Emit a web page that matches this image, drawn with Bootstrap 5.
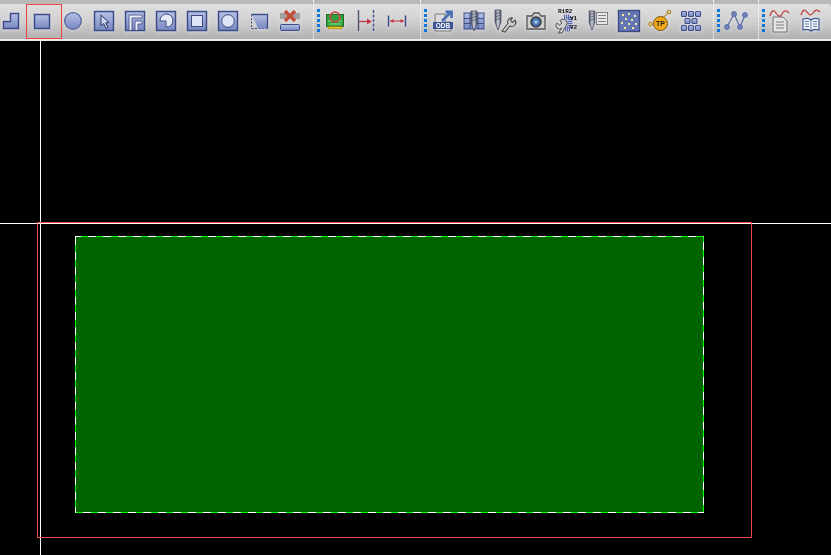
<!DOCTYPE html>
<html lang="en">
<head>
    <meta charset="UTF-8">
    <title>Layout editor</title>
    <link href="https://cdn.jsdelivr.net/npm/bootstrap@5.3.3/dist/css/bootstrap.min.css" rel="stylesheet">
    <style>
        html, body { height: 100%; }
        body { background: #000; overflow: hidden; font-family: "Liberation Sans", Arial, sans-serif; }
        .tool-strip { height: 41px; background: #b9b9b9; border-bottom: 2px solid #ececec; padding-top: 4px; }
        .tool-group { height: 35px; border-left: 1px dotted #fff; background: linear-gradient(#e0e0e0, #d0d0d0 50%, #b0b0b0); border-top-right-radius: 3px; border-bottom-right-radius: 3px; position: relative; }
        .tool-group::before { content: ""; position: absolute; left: 0; top: -4px; height: 4px; border-left: 1px dotted #fff; margin-left: -1px; }
        .group-a { width: 313px; border-left: 0; padding-left: 0; }
        .group-b { width: 107px; }
        .group-c { width: 293px; }
        .group-d { width: 45px; }
        .group-e { flex: 1; }
        .grip { width: 3px; height: 25px; margin: 5px 3px 0 3px; flex: none; background: repeating-linear-gradient(#0a78dc 0 3px, transparent 3px 5px); }
        .group-c .grip { margin-right: 4px; }
        .tool-btn { width: 24px; height: 24px; flex: none; position: relative; overflow: visible; filter: drop-shadow(0 0 2px rgba(226,226,234,1)); }
        .tool-row { gap: 7px; padding-top: 5px; }
        .group-a .tool-row { margin-left: -1px; }
        .active-tool { position: absolute; left: 26px; top: 0; width: 36px; height: 35px; border: 1px solid #f04040; }
        .canvas-area { display: block; }
    </style>
</head>
<body>
    <svg width="0" height="0" class="position-absolute">
        <defs>
            <linearGradient id="tile" x1="0" y1="0" x2="0" y2="1">
                <stop offset="0" stop-color="#b6c1e4"/>
                <stop offset="1" stop-color="#7788c2"/>
            </linearGradient>
            <linearGradient id="metal" x1="0" y1="0" x2="1" y2="0">
                <stop offset="0" stop-color="#4c5264"/>
                <stop offset=".5" stop-color="#ccd0da"/>
                <stop offset="1" stop-color="#4c5264"/>
            </linearGradient>
            <symbol id="drill" viewBox="0 0 8 22">
                <path d="M1 1H7V13L4 21 1 13Z" fill="url(#metal)" stroke="#484e62" stroke-width=".8"/>
                <path d="M1 5 7 3M1 8 7 6M1 11 7 9" stroke="#484e62" stroke-width=".7"/>
            </symbol>
        </defs>
    </svg>

    <div class="tool-strip d-flex">
        <div class="tool-group group-a">
            <div class="tool-row d-flex">
                <svg class="tool-btn" viewBox="0 0 24 24"><path d="M4.500 12.500H11.500V4.500H19.500V19.500H4.500Z" fill="url(#tile)" stroke="#3e4d86" stroke-width="1.500"/></svg>
                <svg class="tool-btn" viewBox="0 0 24 24"><rect x="4.500" y="5.500" width="15" height="14" fill="url(#tile)" stroke="#3e4d86" stroke-width="1.500"/></svg>
                <svg class="tool-btn" viewBox="0 0 24 24"><circle cx="12" cy="12" r="8.300" fill="url(#tile)" stroke="#54649c" stroke-width="1.300"/></svg>
                <svg class="tool-btn" viewBox="0 0 24 24"><rect x="2.500" y="2.500" width="19" height="19" fill="url(#tile)" stroke="#3e4d86" stroke-width="1.500"/><path d="M9 6V17L11.700 14.500 14 19.500 16 18.500 13.700 13.700H17Z" fill="#cfd6ee" stroke="#2e3a66"/></svg>
                <svg class="tool-btn" viewBox="0 0 24 24"><rect x="2.500" y="2.500" width="19" height="19" fill="url(#tile)" stroke="#3e4d86" stroke-width="1.500"/><path d="M6 21V6H19V9H9V21M12 21V12H19V15H15V21" fill="#e6eaf6" stroke="#3c4a80" stroke-width=".8"/></svg>
                <svg class="tool-btn" viewBox="0 0 24 24"><rect x="2.500" y="2.500" width="19" height="19" fill="url(#tile)" stroke="#3e4d86" stroke-width="1.500"/><path d="M6 11A6.500 6.500 0 1 1 12 18V12H6Z" fill="#e6eaf6" stroke="#3c4a80"/></svg>
                <svg class="tool-btn" viewBox="0 0 24 24"><rect x="2.500" y="2.500" width="19" height="19" fill="url(#tile)" stroke="#3e4d86" stroke-width="1.500"/><rect x="6.500" y="6.500" width="11" height="11" fill="#dfe4f4" stroke="#3c4a80"/></svg>
                <svg class="tool-btn" viewBox="0 0 24 24"><rect x="2.500" y="2.500" width="19" height="19" fill="url(#tile)" stroke="#3e4d86" stroke-width="1.500"/><circle cx="12" cy="12" r="6.300" fill="#dfe4f4" stroke="#3c4a80"/></svg>
                <svg class="tool-btn" viewBox="0 0 24 24"><path d="M4.500 5.500V19.500H20" fill="none" stroke="#3e4d86" stroke-dasharray="2 1.500"/><path d="M4.500 5.500H20.500V19.500H11Z" fill="url(#tile)"/><path d="M4.500 5.500H20.500V19.500" fill="none" stroke="#3e4d86" stroke-width="1.300"/></svg>
                <svg class="tool-btn" viewBox="0 0 24 24"><rect x="2" y="4" width="20" height="6" fill="#a0a0a0"/><path d="M7 2 17 12M17 2 7 12" stroke="#c0503c" stroke-width="3.400"/><rect x="2.500" y="15.500" width="19" height="6" rx="1" fill="url(#tile)" stroke="#3e4d86"/></svg>
            </div>
            <div class="active-tool"></div>
        </div>

        <div class="tool-group group-b d-flex">
            <div class="grip"></div>
            <div class="tool-row d-flex">
                <svg class="tool-btn" viewBox="0 0 24 24"><rect x="3.500" y="5.500" width="17" height="12" fill="#2fa23c" stroke="#1a6a28"/><path d="M5 12H9M15 12H19M6 15H18" stroke="#8fe08a"/><rect x="5" y="17.500" width="14" height="2.500" fill="#e0c020" stroke="#8a7410" stroke-width=".5"/><circle cx="12" cy="8" r="4.800" fill="none" stroke="#c84646" stroke-width="1.800"/></svg>
                <svg class="tool-btn" viewBox="0 0 24 24"><path d="M4.500 1V22" stroke="#50586c" stroke-width="1.500"/><path d="M19.500 1V22" stroke="#46558c" stroke-width="1.500" stroke-dasharray="3 1.500"/><path d="M5 12.500H14" stroke="#c03c44" stroke-width="1.300"/><path d="M18 12.500 13 9.500V15.500Z" fill="#c03c44"/></svg>
                <svg class="tool-btn" viewBox="0 0 24 24"><path d="M3.500 6.500V17.500M20.500 6.500V17.500" stroke="#3c4a88" stroke-width="1.500"/><path d="M5 12H19" stroke="#c03c44" stroke-width="1.100"/><path d="M5 12 8.500 10V14ZM19 12 15.500 10V14Z" fill="#c03c44"/></svg>
            </div>
        </div>

        <div class="tool-group group-c d-flex">
            <div class="grip"></div>
            <div class="tool-row d-flex">
                <svg class="tool-btn" viewBox="0 0 24 24"><path d="M4 5H14V13H20V22H4Z" fill="#dcdcdc" stroke="#777"/><path d="M11 12 19 4M14.500 3H20.500V9" fill="none" stroke="#4a70b4" stroke-width="2.800"/><rect x="2" y="13" width="20" height="7" fill="#3c5494"/><text x="12" y="19" text-anchor="middle" fill="#fff" font-family="Liberation Sans" font-size="6.500" font-weight="700">ODB</text></svg>
                <svg class="tool-btn" viewBox="0 0 24 24"><rect x="2" y="4" width="20" height="16" fill="url(#tile)" stroke="#3e4d86"/><path d="M8 4V20M16 4V20M2 9.500H22M2 14.500H22" stroke="#3e4d86"/><use href="#drill" x="8" y="1" width="8" height="22"/></svg>
                <svg class="tool-btn" viewBox="0 0 24 24"><use href="#drill" x="1" y="0" width="8" height="22"/><path d="M9 22 15 14.500A4 4 0 0 1 19.500 9L17.500 11.500 19.500 13.500 22 11A4 4 0 0 1 17 17L12 23Z" fill="#d0d0d0" stroke="#4c4c4c" stroke-width="1.100"/></svg>
                <svg class="tool-btn" viewBox="0 0 24 24"><path d="M3 7H8L10 4H15L17 7H21V20H3Z" fill="#d0d0d0" stroke="#555" stroke-width="1.300"/><circle cx="12" cy="13" r="5" fill="#4a74b4" stroke="#3c3c3c" stroke-width="1.500"/><circle cx="12" cy="13" r="1.800" fill="#a8c4e8"/></svg>
                <svg class="tool-btn" viewBox="0 0 24 24"><text x="3" y="4" fill="#111" font-family="Liberation Mono" font-size="6" font-weight="700">R1R2</text><path d="M9 8H15V20H10" fill="none" stroke="#5a6ab0" stroke-width="5" stroke-dasharray="1.200 .8"/><text x="15" y="11" fill="#111" font-family="Liberation Mono" font-size="6" font-weight="700">V1</text><text x="15" y="20" fill="#111" font-family="Liberation Mono" font-size="6" font-weight="700">V2</text><path d="M3 24 7 19A3.500 3.500 0 0 1 2 14L4.500 16 7 14 5 11.500A4 4 0 0 1 11 17L7 24Z" fill="#d0d0d0" stroke="#4c4c4c" stroke-width="1"/></svg>
                <svg class="tool-btn" viewBox="0 0 24 24"><use href="#drill" x="2" y="1" width="8" height="21"/><rect x="10.500" y="3.500" width="11" height="12" fill="#e8e8e8" stroke="#808080"/><path d="M12 6.500H20M12 9.500H20M12 12.500H20" stroke="#808080"/></svg>
                <svg class="tool-btn" viewBox="0 0 24 24"><rect x="1.500" y="1.500" width="21" height="21" fill="#6476b4" stroke="#3c4a80" stroke-width="1.400"/><g fill="#f4e8a0"><rect x="5" y="5" width="2" height="2"/><rect x="11" y="4" width="2" height="2"/><rect x="17" y="6" width="2" height="2"/><rect x="8" y="9" width="2" height="2"/><rect x="14" y="10" width="2" height="2"/><rect x="4" y="13" width="2" height="2"/><rect x="11" y="14" width="2" height="2"/><rect x="18" y="14" width="2" height="2"/><rect x="7" y="18" width="2" height="2"/><rect x="15" y="18" width="2" height="2"/></g></svg>
                <svg class="tool-btn" viewBox="0 0 24 24"><path d="M1 15H6M15 9 20.500 3.500" stroke="#c09030" stroke-width="1.300"/><circle cx="2.500" cy="15" r="1.800" fill="#e8d080" stroke="#a07820"/><circle cx="21" cy="3" r="1.800" fill="#e8d080" stroke="#a07820"/><circle cx="12.500" cy="14.500" r="7" fill="#f0a818" stroke="#7a5410"/><text x="12.500" y="17" text-anchor="middle" fill="#222" font-family="Liberation Sans" font-size="7" font-weight="700">TP</text></svg>
                <svg class="tool-btn" viewBox="0 0 24 24"><g fill="url(#tile)" stroke="#3e4d86" stroke-width="1.100"><rect x="2.500" y="2.500" width="5" height="5" rx="1"/><rect x="9.500" y="2.500" width="5" height="5" rx="1"/><rect x="16.500" y="2.500" width="5" height="5" rx="1"/><rect x="6" y="9.500" width="5" height="5" rx="1"/><rect x="13" y="9.500" width="5" height="5" rx="1"/><rect x="2.500" y="16.500" width="5" height="5" rx="1"/><rect x="9.500" y="16.500" width="5" height="5" rx="1"/><rect x="16.500" y="16.500" width="5" height="5" rx="1"/></g></svg>
            </div>
        </div>

        <div class="tool-group group-d d-flex">
            <div class="grip"></div>
            <div class="tool-row d-flex">
                <svg class="tool-btn" viewBox="0 0 24 24"><path d="M4 18 11 5 17 18 22 6" fill="none" stroke="#6070a4" stroke-width="1.300"/><g fill="#7283bc" stroke="#54649c" stroke-width=".8"><circle cx="4" cy="18" r="2.500"/><circle cx="11" cy="5" r="2.500"/><circle cx="17" cy="18" r="2.500"/><circle cx="22" cy="6" r="2.500"/></g></svg>
            </div>
        </div>

        <div class="tool-group group-e d-flex">
            <div class="grip"></div>
            <div class="tool-row d-flex">
                <svg class="tool-btn" viewBox="0 0 24 24"><path d="M5 8H15L19 12V23H5Z" fill="#e4e4e4" stroke="#707070"/><path d="M8 13H16M8 16H16M8 19H16" stroke="#808080"/><path d="M2 7C4 0 6 1 8 4S12 9 14 5 18 1 21 4" fill="none" stroke="#c04040" stroke-width="1.300"/></svg>
                <svg class="tool-btn" viewBox="0 0 24 24"><path d="M12 11C10 9 7 9 4 10V21C7 20 10 20 12 22 14 20 17 20 20 21V10C17 9 14 9 12 11Z" fill="#f0f4fa" stroke="#3c5a90" stroke-width="1.200"/><path d="M12 11V22M6 12.500H10M6 15H10M6 17.500H10M14 12.500H18M14 15H18M14 17.500H18" stroke="#3c5a90" stroke-width=".8"/><path d="M2 6C4 0 6 0 8 3S12 7 14 4 18 0 21 3" fill="none" stroke="#c04040" stroke-width="1.300"/></svg>
            </div>
        </div>
    </div>

    <svg class="canvas-area" width="831" height="514" viewBox="0 41 831 514" shape-rendering="crispEdges">
        <path d="M40.500 41V555M0 223.500H831" stroke="#fff" fill="none"/>
        <rect x="75.500" y="236.500" width="628" height="276" fill="#006400" stroke="#00ff00"/>
        <g stroke="#fff" stroke-dasharray="8 7" fill="none">
            <path d="M75 236.500H704" stroke-dashoffset="2"/>
            <path d="M703.500 236V513" stroke-dashoffset="9"/>
            <path d="M75 512.500H704" stroke-dashoffset="7"/>
            <path d="M75.500 236V513" stroke-dashoffset="14"/>
        </g>
        <rect x="37.500" y="222.500" width="714" height="315" fill="none" stroke="#f04848"/>
    </svg>

    <script src="https://cdn.jsdelivr.net/npm/bootstrap@5.3.3/dist/js/bootstrap.bundle.min.js"></script>
</body>
</html>
